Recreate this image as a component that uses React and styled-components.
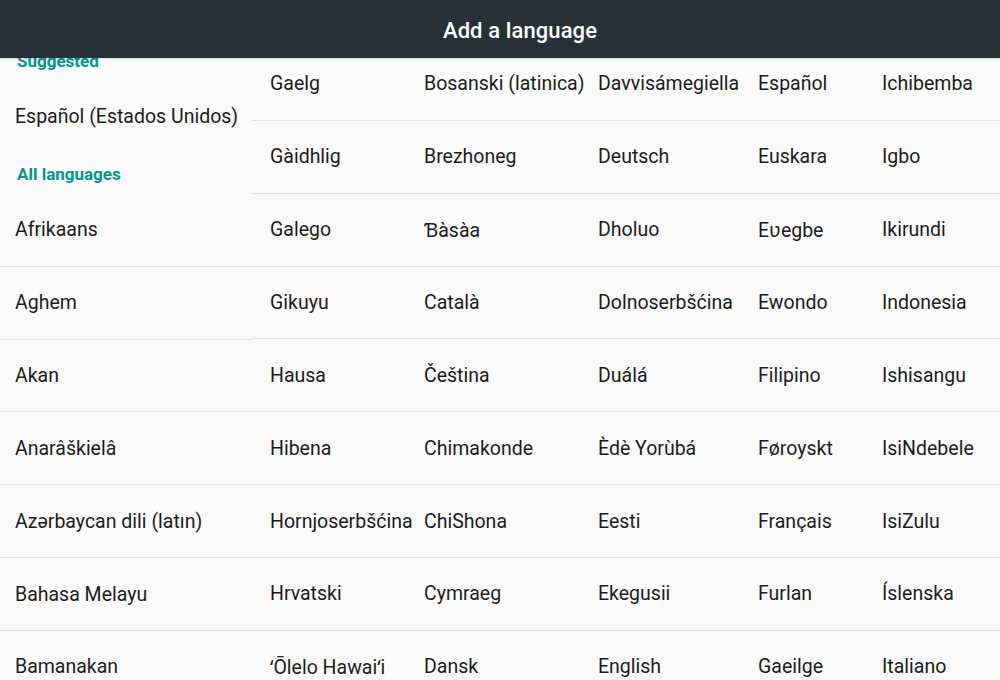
import React from "react";
import styled, { createGlobalStyle } from "styled-components";

const GlobalStyle = createGlobalStyle`
  html, body {
    margin: 0;
    padding: 0;
    background: #fafafa;
  }
  body {
    font-family: Roboto, "Noto Sans", "Liberation Sans", sans-serif;
    -webkit-font-smoothing: antialiased;
  }
`;

const columns = [
  {
    width: 252,
    pad: 15,
    top: 0,
    sections: [
      { title: "Suggested", items: ["Español (Estados Unidos)"], flat: true },
      {
        title: "All languages",
        items: [
          "Afrikaans",
          "Aghem",
          "Akan",
          "Anarâškielâ",
          "Azərbaycan dili (latın)",
          "Bahasa Melayu",
          "Bamanakan",
        ],
      },
    ],
  },
  {
    width: 168,
    pad: 18,
    top: 7,
    items: [
      "Gaelg",
      "Gàidhlig",
      "Galego",
      "Gikuyu",
      "Hausa",
      "Hibena",
      "Hornjoserbšćina",
      "Hrvatski",
      "ʻŌlelo Hawaiʻi",
    ],
  },
  {
    width: 168,
    pad: 4,
    top: 7,
    items: [
      "Bosanski (latinica)",
      "Brezhoneg",
      "Ɓàsàa",
      "Català",
      "Čeština",
      "Chimakonde",
      "ChiShona",
      "Cymraeg",
      "Dansk",
    ],
  },
  {
    width: 164,
    pad: 10,
    top: 7,
    items: [
      "Davvisámegiella",
      "Deutsch",
      "Dholuo",
      "Dolnoserbšćina",
      "Duálá",
      "Èdè Yorùbá",
      "Eesti",
      "Ekegusii",
      "English",
    ],
  },
  {
    width: 126,
    pad: 6,
    top: 7,
    items: [
      "Español",
      "Euskara",
      "Eʋegbe",
      "Ewondo",
      "Filipino",
      "Føroyskt",
      "Français",
      "Furlan",
      "Gaeilge",
    ],
  },
  {
    width: 122,
    pad: 4,
    top: 7,
    items: [
      "Ichibemba",
      "Igbo",
      "Ikirundi",
      "Indonesia",
      "Ishisangu",
      "IsiNdebele",
      "IsiZulu",
      "Íslenska",
      "Italiano",
    ],
  },
];

const Screen = styled.div`
  width: 1000px;
  height: 680px;
  display: flex;
  flex-direction: column;
  overflow: hidden;
  background: #fafafa;
`;

const TitleBar = styled.header`
  position: relative;
  z-index: 2;
  flex: 0 0 58px;
  display: flex;
  align-items: center;
  justify-content: center;
  padding: 2px 0 0 40px;
  box-sizing: border-box;
  background: #283136;
  box-shadow: 0 1px 2px rgba(0, 0, 0, 0.12);
`;

const Title = styled.h1`
  margin: 0;
  color: #ffffff;
  font-size: 22px;
  font-weight: 500;
  letter-spacing: 0.1px;
`;

const Viewport = styled.div`
  flex: 1;
  overflow: hidden;
`;

/* list is scrolled a little, so the first rows sit under the bar */
const Grid = styled.div`
  margin-top: -17px;
  display: flex;
  align-items: flex-start;
`;

const Column = styled.ul`
  list-style: none;
  margin: 0;
  padding: ${({ $top }) => $top}px 0 0;
  width: ${({ $width }) => $width}px;
  flex: 0 0 ${({ $width }) => $width}px;
`;

const SectionTitle = styled.li`
  height: 40px;
  display: flex;
  align-items: center;
  padding-left: 17px;
  color: #009688;
  font-size: 17px;
  font-weight: 700;
`;

const Row = styled.li`
  height: 71.86px;
  display: flex;
  align-items: center;
  padding-left: ${({ $pad }) => $pad}px;
  color: #1c1c1c;
  font-size: 19.5px;
  white-space: nowrap;
  border-bottom: 1px solid ${({ $flat }) => ($flat ? "transparent" : "#e2e2e2")};
`;

const LanguageColumn = ({ column }) => (
  <Column $width={column.width} $top={column.top}>
    {column.sections
      ? column.sections.map((section) => (
          <React.Fragment key={section.title}>
            <SectionTitle>{section.title}</SectionTitle>
            {section.items.map((name) => (
              <Row key={name} $pad={column.pad} $flat={section.flat}>
                {name}
              </Row>
            ))}
          </React.Fragment>
        ))
      : column.items.map((name) => (
          <Row key={name} $pad={column.pad}>
            {name}
          </Row>
        ))}
  </Column>
);

const App = () => (
  <>
    <GlobalStyle />
    <Screen>
      <TitleBar>
        <Title>Add a language</Title>
      </TitleBar>
      <Viewport>
        <Grid>
          {columns.map((column, index) => (
            <LanguageColumn key={index} column={column} />
          ))}
        </Grid>
      </Viewport>
    </Screen>
  </>
);

export default App;
